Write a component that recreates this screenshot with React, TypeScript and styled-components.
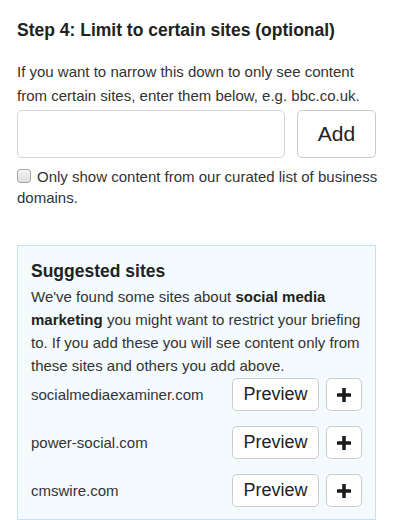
import styled, { createGlobalStyle } from "styled-components";

const GlobalStyle = createGlobalStyle`
  body {
    margin: 0;
    background: #ffffff;
    font-family: "Liberation Sans", Arial, sans-serif;
    color: #333333;
  }
`;

const sites = ["socialmediaexaminer.com", "power-social.com", "cmswire.com"];

const PlusIcon = () => (
  <svg width="14" height="14" viewBox="0 0 14 14" aria-hidden="true">
    <rect x="5.25" y="0" width="3.5" height="14" fill="#1a1a1a" />
    <rect x="0" y="5.25" width="14" height="3.5" fill="#1a1a1a" />
  </svg>
);

const App = () => {
  return (
    <>
      <GlobalStyle />
      <Page>
        <Title>Step 4: Limit to certain sites (optional)</Title>
        <Intro>
          If you want to narrow this down to only see content from certain
          sites, enter them below, e.g. bbc.co.uk.
        </Intro>

        <InputRow>
          <SiteInput type="text" />
          <AddButton>Add</AddButton>
        </InputRow>

        <CheckLabel>
          <CheckBox type="checkbox" />
          Only show content from our curated list of business domains.
        </CheckLabel>

        <SuggestBox>
          <BoxTitle>Suggested sites</BoxTitle>
          <BoxText>
            We've found some sites about <strong>social media marketing</strong>{" "}
            you might want to restrict your briefing to. If you add these you
            will see content only from these sites and others you add above.
          </BoxText>
          <SiteList>
            {sites.map((site) => (
              <SiteRow key={site}>
                <SiteName>{site}</SiteName>
                <PreviewButton>Preview</PreviewButton>
                <PlusButton aria-label={`Add ${site}`}>
                  <PlusIcon />
                </PlusButton>
              </SiteRow>
            ))}
          </SiteList>
        </SuggestBox>
      </Page>
    </>
  );
};

const Page = styled.div`
  padding: 18px 24px 0 17px;
`;

const Title = styled.h2`
  margin: 0;
  font-size: 17.5px;
  line-height: 24px;
  font-weight: 700;
  color: #222222;
`;

const Intro = styled.p`
  margin: 18px 0 0;
  font-size: 15px;
  line-height: 24px;
`;

const InputRow = styled.div`
  display: flex;
  gap: 12px;
  margin-top: 2px;
  height: 48px;
`;

const SiteInput = styled.input`
  flex: 1;
  min-width: 0;
  box-sizing: border-box;
  border: 1px solid #d4d4d4;
  border-radius: 5px;
  padding: 0 12px;
  font-size: 18px;
  font-family: inherit;
  outline: none;
`;

const Button = styled.button`
  box-sizing: border-box;
  background: #ffffff;
  border: 1px solid #cccccc;
  border-radius: 5px;
  font-family: "Liberation Sans", Arial, sans-serif;
  color: #222222;
  cursor: pointer;
  padding: 0;
`;

const AddButton = styled(Button)`
  width: 79px;
  font-size: 21px;
`;

const CheckLabel = styled.label`
  display: block;
  margin-top: 8px;
  margin-right: -6px;
  font-size: 15px;
  line-height: 21px;
`;

const CheckBox = styled.input`
  appearance: none;
  width: 14px;
  height: 14px;
  margin: 0 6px 0 0;
  vertical-align: -1px;
  border: 1px solid #a9a9a9;
  border-radius: 3px;
  background: linear-gradient(#f4f4f4, #dedede);
  box-sizing: border-box;
`;

const SuggestBox = styled.div`
  margin-top: 37px;
  border: 1px solid #bfe3f3;
  background: #f3fbff;
  padding: 13px 13px 12px;
`;

const BoxTitle = styled.h3`
  margin: 0;
  font-size: 17.5px;
  line-height: 24px;
  font-weight: 700;
  color: #222222;
`;

const BoxText = styled.p`
  margin: 2px 0 0;
  font-size: 15px;
  line-height: 23px;

  strong {
    color: #222222;
  }
`;

const SiteList = styled.div`
  display: flex;
  flex-direction: column;
  gap: 15px;
  margin-top: 1px;
`;

const SiteRow = styled.div`
  display: flex;
  align-items: center;
  gap: 7px;
  height: 33px;
`;

const SiteName = styled.span`
  flex: 1;
  font-size: 15px;
`;

const PreviewButton = styled(Button)`
  width: 87px;
  height: 33px;
  font-size: 18px;
`;

const PlusButton = styled(Button)`
  width: 36px;
  height: 33px;
  display: flex;
  align-items: center;
  justify-content: center;
`;

export default App;
